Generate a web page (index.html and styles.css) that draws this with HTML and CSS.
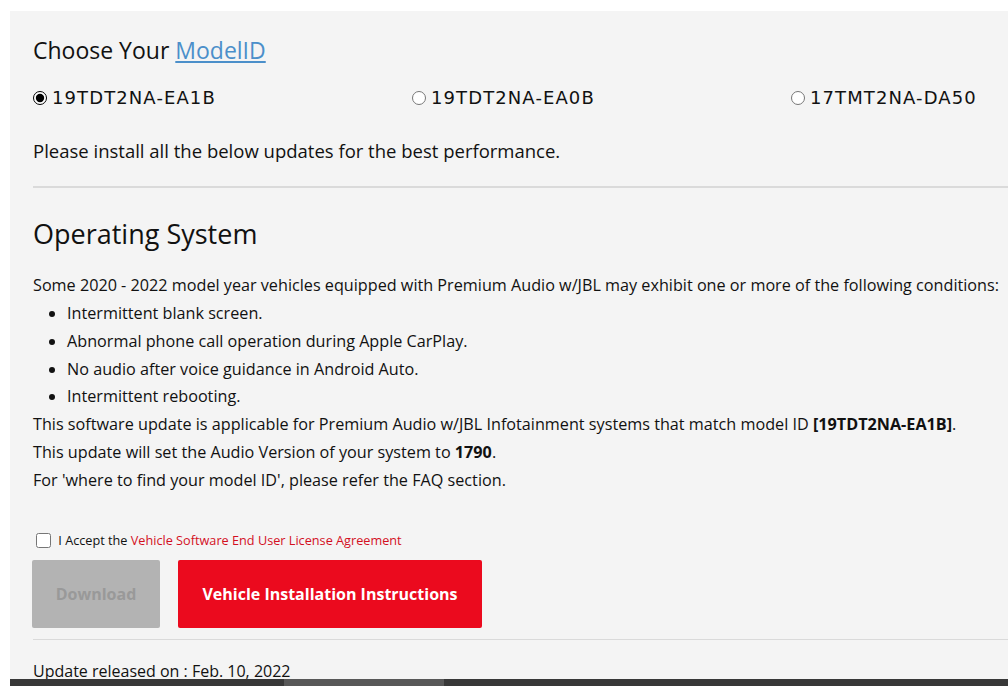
FILE: index.html
```html
<!DOCTYPE html>
<html lang="en">
  <head>
    <meta charset="UTF-8" />
    <meta name="viewport" content="width=device-width, initial-scale=1.0" />
    <title>Software Update</title>
    <link rel="stylesheet" href="styles.css">
  </head>
  <body>
    <main class="panel">
      <h2 class="title">Choose Your <a href="#">ModelID</a></h2>
      <div class="models">
        <label class="model"><input type="radio" name="model" checked>19TDT2NA-EA1B</label>
        <label class="model"><input type="radio" name="model">19TDT2NA-EA0B</label>
        <label class="model"><input type="radio" name="model">17TMT2NA-DA50</label>
      </div>
      <p class="note">Please install all the below updates for the best performance.</p>

      <hr class="rule">

      <section class="update">
        <h2 class="section-title">Operating System</h2>
        <div class="desc">
          <p>Some 2020 - 2022 model year vehicles equipped with Premium Audio w/JBL may exhibit one or more of the following conditions:</p>
          <ul>
            <li>Intermittent blank screen.</li>
            <li>Abnormal phone call operation during Apple CarPlay.</li>
            <li>No audio after voice guidance in Android Auto.</li>
            <li>Intermittent rebooting.</li>
          </ul>
          <p>This software update is applicable for Premium Audio w/JBL Infotainment systems that match model ID <strong>[19TDT2NA-EA1B]</strong>.</p>
          <p>This update will set the Audio Version of your system to <strong>1790</strong>.</p>
          <p>For 'where to find your model ID', please refer the FAQ section.</p>
        </div>

        <label class="accept"><input type="checkbox"> I Accept the <a href="#">Vehicle Software End User License Agreement</a></label>
        <div class="actions">
          <button class="btn btn-disabled" disabled>Download</button>
          <button class="btn btn-red">Vehicle Installation Instructions</button>
        </div>

        <hr class="rule rule-bottom">
        <p class="released">Update released on : Feb. 10, 2022</p>
      </section>
    </main>

    <!-- scroll bar of the update frame -->
    <div class="scrollbar"><div class="thumb"></div></div>
  </body>
</html>
```

FILE: styles.css
```css
html {
  overflow: hidden;
}

body {
  margin: 0;
  padding: 11px 0 0 10px;
  background: #fff;
  font-family: "Open Sans", Lato, sans-serif;
  color: #111;
}

.panel {
  width: 1137px;
  background: #f4f4f4;
  padding: 22px 23px 40px;
}

.title {
  margin: 0;
  font-size: 23px;
  font-weight: 400;
  line-height: 34px;
}

.title a {
  color: #4b8fca;
}

.models {
  display: grid;
  grid-template-columns: repeat(3, 1fr);
  margin-top: 20px;
}

.model {
  display: flex;
  align-items: center;
  font-family: "DejaVu Sans", sans-serif;
  font-size: 18px;
  letter-spacing: 1.1px;
  line-height: 22px;
}

.model input {
  margin: 0 5px 0 0;
  width: 14px;
  height: 14px;
  accent-color: #000;
}

.note {
  margin: 30px 0 0;
  font-size: 18.5px;
  line-height: 24px;
}

.rule {
  border: 0;
  border-top: 2px solid #dadada;
  margin: 23px 0 0;
}

.section-title {
  margin: 28px 0 0;
  font-size: 27px;
  font-weight: 400;
  line-height: 36px;
}

.desc {
  margin-top: 20px;
  font-size: 16.2px;
  line-height: 27.85px;
}

.desc p {
  margin: 0;
}

.desc ul {
  margin: 0;
  padding-left: 34px;
}

.accept {
  display: block;
  margin-top: 36px;
  font-size: 12.7px;
  line-height: 18px;
}

.accept input {
  margin: 0 4px 0 3px;
  width: 15px;
  height: 15px;
  vertical-align: -3px;
}

.accept a {
  color: #d3101f;
  text-decoration: none;
}

.actions {
  display: flex;
  gap: 18px;
  margin: 11px 0 0 -1px;
}

.btn {
  height: 68px;
  border: 0;
  border-radius: 2px;
  font-family: "Open Sans", Lato, sans-serif;
  font-size: 16px;
  font-weight: 700;
}

.btn-disabled {
  width: 128px;
  background: #b3b3b3;
  color: #999;
}

.btn-red {
  width: 304px;
  background: #eb0a1e;
  color: #fff;
  cursor: pointer;
}

.rule-bottom {
  border-top-width: 1px;
  margin-top: 11px;
}

.released {
  margin: 19px 0 0;
  font-size: 16px;
  line-height: 24px;
}

.scrollbar {
  position: fixed;
  left: 10px;
  right: 0;
  bottom: 0;
  height: 7px;
  background: #383838;
}

.thumb {
  margin-left: 274px;
  width: 160px;
  height: 100%;
  background: #585858;
}
```
